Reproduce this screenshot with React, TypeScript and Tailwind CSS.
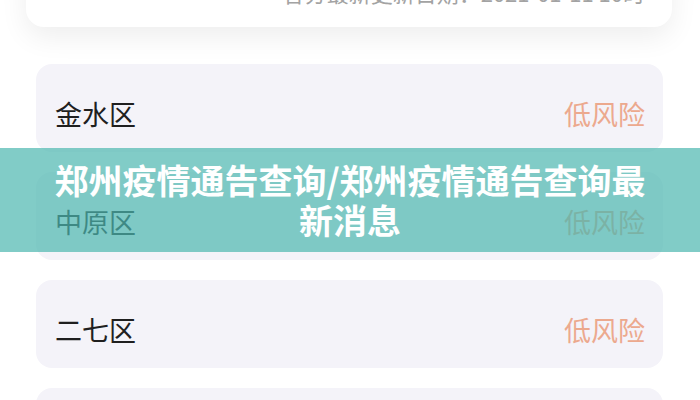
import React from "react";

const cjk = { fontFamily: '"Noto Sans CJK SC", "Noto Sans", sans-serif' };

const rows = [
  { name: "金水区", risk: "低风险" },
  { name: "中原区", risk: "低风险" },
  { name: "二七区", risk: "低风险" },
];

export default function App() {
  return (
    <div className="relative w-[700px] h-[400px] overflow-hidden bg-white" style={cjk}>
      <div className="flex flex-col">
        <div className="mt-[-60px] ml-[26px] mr-[28px] h-[87px] rounded-[18px] bg-white shadow-[0_10px_28px_rgba(0,0,0,0.07)] flex items-end justify-end pr-[27px] pb-[20px]">
          <span className="text-[22px] leading-[30px] text-[#a3a3a3]">各分最新更新日期：2021-01-11 10时</span>
        </div>
        <div className="mt-[37px] flex flex-col gap-[20px]">
          {rows.map((r) => (
            <div
              key={r.name}
              className="ml-[36px] mr-[37px] h-[88px] rounded-[16px] bg-[#f4f3f9] flex items-center justify-between pl-[19px] pr-[18px] pt-[10px]"
            >
              <span className="text-[27px] leading-none text-[#1f1f1f]">{r.name}</span>
              <span className="text-[27px] leading-none text-[#eca98e]">{r.risk}</span>
            </div>
          ))}
          <div className="ml-[36px] mr-[37px] h-[88px] rounded-[16px] bg-[#f4f3f9]" />
        </div>
      </div>
      <div className="absolute left-0 right-0 top-[148px] h-[104px] bg-[rgba(75,182,175,0.7)] flex items-center justify-center px-[50px]">
        <h1 className="text-center text-white font-bold text-[34px] leading-[40px]">
          郑州疫情通告查询/郑州疫情通告查询最新消息
        </h1>
      </div>
    </div>
  );
}
